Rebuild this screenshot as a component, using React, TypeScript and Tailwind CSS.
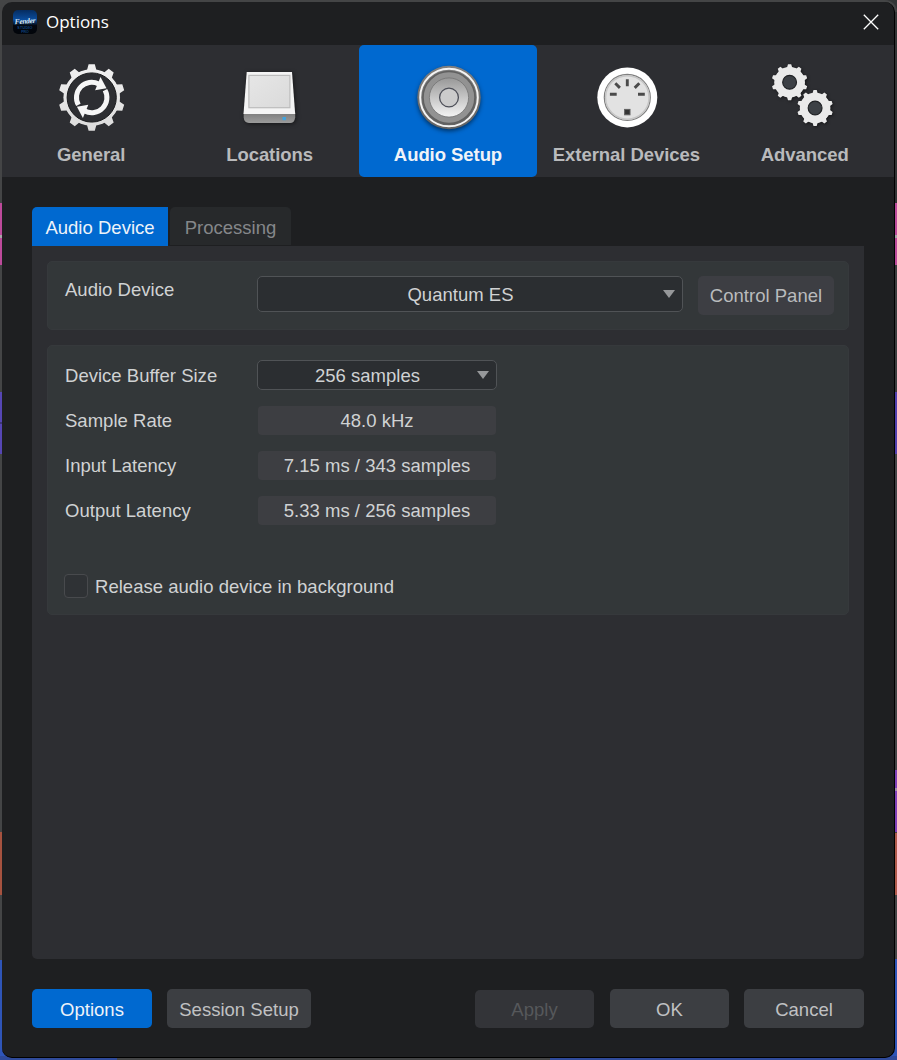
import { FC, ReactNode } from 'react';

interface TabProps {
  label: string;
  icon: ReactNode;
  active?: boolean;
}

interface RowProps {
  label: string;
  value: string;
}

const gearPath = (cx: number, cy: number, root: number, tip: number, base: number, top: number) => {
  const teeth = 10;
  const points: string[] = [];
  for (let i = 0; i < teeth; i++) {
    const mid = (i / teeth) * Math.PI * 2 - Math.PI / 2;
    [
      [root, -base],
      [tip, -top],
      [tip, top],
      [root, base],
    ].forEach(([r, half]) => {
      const a = mid + half / r;
      points.push(`${(cx + r * Math.cos(a)).toFixed(2)} ${(cy + r * Math.sin(a)).toFixed(2)}`);
    });
  }
  return `M${points.join('L')}Z`;
};

const iconClass = 'h-20 w-20 overflow-visible';

const GeneralIcon = () => (
  <svg viewBox="0 0 80 80" className={iconClass}>
    <defs>
      <linearGradient id="gearFill" x1="0" y1="0" x2="0" y2="1">
        <stop offset="0" stopColor="#f0f0f0" />
        <stop offset="1" stopColor="#dcdcdc" />
      </linearGradient>
    </defs>
    <path d={gearPath(40.7, 40.5, 28, 33.3, 4.7, 3.1)} fill="url(#gearFill)" />
    <circle cx="40.7" cy="40.5" r="28.3" fill="url(#gearFill)" />
    <circle cx="40.7" cy="40.5" r="24.6" fill="#2d2e32" stroke="#1b1c1e" strokeWidth="1" />
    <g transform="translate(40.7 40.5)" fill="#f6f6f6">
      <path d="M-13.3 7.4A15.2 15.2 0 0 1 7 -13.5" fill="none" stroke="#f6f6f6" strokeWidth="5" />
      <path d="M8.8 -20.5L14.8 -9.3L3.4 -7.3Z" />
      <g transform="rotate(180)">
        <path d="M-13.3 7.4A15.2 15.2 0 0 1 7 -13.5" fill="none" stroke="#f6f6f6" strokeWidth="5" />
        <path d="M8.8 -20.5L14.8 -9.3L3.4 -7.3Z" />
      </g>
    </g>
  </svg>
);

const LocationsIcon = () => (
  <svg viewBox="0 0 80 80" className={`${iconClass} drop-shadow-[1px_1px_2px_rgba(0,0,0,0.5)]`}>
    <defs>
      <linearGradient id="driveFront" x1="0" y1="0" x2="0" y2="1">
        <stop offset="0" stopColor="#7c7c7c" />
        <stop offset="1" stopColor="#9c9c9c" />
      </linearGradient>
      <linearGradient id="driveTop" x1="0" y1="0" x2="1" y2="1">
        <stop offset="0" stopColor="#e6e6e6" />
        <stop offset="1" stopColor="#dadada" />
      </linearGradient>
    </defs>
    <path d="M13.700 56H65.200V60.500Q64.500 66 60 66H19Q14 65.500 13.700 60.500Z" fill="url(#driveFront)" />
    <path d="M16.700 15H62L65.200 57H13.500Z" fill="#f4f4f4" />
    <rect x="18.900" y="18.400" width="41" height="32.300" fill="url(#driveTop)" stroke="#bcbcbc" strokeWidth="1.200" />
    <rect x="52.500" y="60" width="3.400" height="3.200" fill="#3fa4e0" />
  </svg>
);

const SpeakerIcon = () => (
  <svg viewBox="0 0 80 80" className={`${iconClass} drop-shadow-[0_2px_2px_rgba(0,0,0,0.5)]`}>
    <defs>
      <linearGradient id="cone" x1="0" y1="0" x2="0" y2="1">
        <stop offset="0" stopColor="#989898" />
        <stop offset="1" stopColor="#f4f4f4" />
      </linearGradient>
      <linearGradient id="rim" x1="0" y1="0" x2="0" y2="1">
        <stop offset="0" stopColor="#808080" />
        <stop offset="1" stopColor="#626262" />
      </linearGradient>
    </defs>
    <circle cx="41" cy="40.500" r="31.700" fill="url(#rim)" />
    <circle cx="41" cy="40.500" r="28.800" fill="none" stroke="#f4f4f4" strokeWidth="2" />
    <circle cx="41" cy="40.500" r="26" fill="#929292" stroke="#606060" strokeWidth="1.600" />
    <circle cx="41" cy="40.500" r="19.600" fill="url(#cone)" stroke="#747474" strokeWidth="0.800" />
    <circle cx="41" cy="40.500" r="9.400" fill="#cbcbcb" stroke="#4d4f58" strokeWidth="1.300" />
  </svg>
);

const MidiIcon = () => (
  <svg viewBox="0 0 80 80" className={`${iconClass} translate-x-px`}>
    <circle cx="40.300" cy="40.400" r="30" fill="#fff" />
    <circle cx="40.300" cy="40.400" r="23" fill="#e2e2e2" stroke="#808080" strokeWidth="1.200" />
    <circle cx="40.300" cy="40.400" r="21.700" fill="none" stroke="#c6c6c6" strokeWidth="1.400" />
    <g stroke="#4a4a4a" strokeWidth="2.900">
      <path d="M40.300 22.300V29.300M22.900 37.300H29.700M51 37.300H57.800M28.300 26.300L32.900 30.900M52.300 26.300L47.700 30.900" />
    </g>
    <rect x="37.600" y="52.400" width="5.400" height="5.400" fill="#333" stroke="#606060" strokeWidth="1" />
  </svg>
);

const AdvancedIcon = () => (
  <svg viewBox="0 0 80 80" className={`${iconClass} drop-shadow-[1px_1px_1.500px_rgba(0,0,0,0.5)]`}>
    {[
      [24.6, 25.3],
      [50.1, 51],
    ].map(([x, y]) => (
      <g key={x}>
        <path d={gearPath(x, y, 15, 18, 2.6, 1.6)} fill="#eaeaea" />
        <circle cx={x} cy={y} r="15.300" fill="#eaeaea" />
        <circle cx={x} cy={y} r="6.900" fill="#3c4045" stroke="#202225" strokeWidth="1.200" />
      </g>
    ))}
  </svg>
);

const AppIcon = () => (
  <svg viewBox="0 0 24 24" className="h-6 w-6">
    <defs>
      <linearGradient id="appGlow" x1="0" y1="0" x2="0" y2="1">
        <stop offset="0" stopColor="#052c60" />
        <stop offset="0.4" stopColor="#0a4c9c" />
        <stop offset="0.650" stopColor="#03070f" />
        <stop offset="1" stopColor="#02050a" />
      </linearGradient>
    </defs>
    <rect width="24" height="24" rx="5" fill="url(#appGlow)" />
    <text x="12" y="13.500" textAnchor="middle" fontSize="7.500" fontStyle="italic" fontWeight="700" fontFamily="Liberation Serif, serif" letterSpacing="-0.300" fill="#dbe7f5" transform="rotate(-4 12 12)">
      Fender
    </text>
    <text x="12" y="19" textAnchor="middle" fontSize="3.600" letterSpacing="0.300" fontFamily="Liberation Sans, sans-serif" fill="#1668bd">
      STUDIO
    </text>
    <text x="12" y="22.600" textAnchor="middle" fontSize="3.400" letterSpacing="0" fontFamily="Liberation Sans, sans-serif" fill="#1668bd">
      PRO
    </text>
  </svg>
);

const CategoryTab: FC<TabProps> = ({ label, icon, active }) => (
  <button
    className={`flex flex-col items-center pt-3 text-[18.5px] leading-6 font-bold tracking-[-0.06px] ${
      active ? 'rounded-[5px] bg-[#0069d0] text-[#f0f3f8]' : 'text-[#b9babc]'
    }`}
  >
    {icon}
    <span className="mt-1.5 whitespace-nowrap">{label}</span>
  </button>
);

const ValueRow: FC<RowProps> = ({ label, value }) => (
  <div className="flex h-[45px] items-start">
    <span className="w-[193px] leading-[32px]">{label}</span>
    <span className="mt-px h-[29px] w-[238px] rounded bg-[#3d3e42] text-center leading-[30px]">{value}</span>
  </div>
);

const Arrow = () => (
  <svg viewBox="0 0 12 8" className="h-2 w-3 shrink-0">
    <path d="M0 0H12L6 8Z" fill="#96989a" />
  </svg>
);

const left = [
  'h-[203px] bg-[#444546]',
  'h-[32px] bg-[#bd4a9b]',
  'h-[3px] bg-[#aaa5a9]',
  'h-[27px] bg-[#bd4a9b]',
  'h-[127px] bg-[#444546]',
  'h-[30px] bg-[#5646b4]',
  'h-[2px] bg-[#3c3577]',
  'h-[30px] bg-[#5646b4]',
  'h-[378px] bg-[#444546]',
  'h-[63px] bg-[#a6523f]',
  'h-[65px] bg-[#444546]',
  'h-[100px] bg-[#2f55b8]',
];

const right = [
  'h-[203px] bg-[#333536]',
  'h-[32px] bg-[#bd4a9b]',
  'h-[3px] bg-[#aaa5a9]',
  'h-[27px] bg-[#bd4a9b]',
  'h-[127px] bg-[#3c3e3f]',
  'h-[62px] bg-[#5140ae]',
  'h-[316px] bg-[#444546]',
  'h-[18px] bg-[#8040b8]',
  'h-[3px] bg-[#a08ab0]',
  'h-[41px] bg-[#8040b8]',
  'h-[1px] bg-[#444546]',
  'h-[62px] bg-[#b05a4c]',
  'h-[64px] bg-[#444546]',
  'h-[101px] bg-[#2f55b8]',
];

const App: FC = () => (
  <div className="relative h-[1060px] w-[897px] overflow-hidden bg-[#444546] font-['Liberation_Sans',Arial,sans-serif] text-[18.5px] tracking-[0.02px] text-[#d0d2d3]">
    {/* tracks of the project window showing around the dialog */}
    <div className="absolute inset-0 flex justify-between">
      <div className="w-3">
        {left.map((c, i) => (
          <div key={i} className={c} />
        ))}
      </div>
      <div className="w-3">
        {right.map((c, i) => (
          <div key={i} className={c} />
        ))}
      </div>
    </div>
    <div className="absolute inset-x-0 bottom-0 flex h-1 justify-between">
      <div className="w-[117px] bg-[#2f4a9a]" />
      <div className="w-[347px] bg-[#2f4a9a]" />
    </div>
    <div className="absolute inset-x-0 top-0 h-3 rounded-t-xl bg-[#444546]" />

    <div className="relative mt-0.5 ml-0.5 flex h-[1056px] w-[893px] flex-col overflow-hidden rounded-[10px] border-r border-b border-black bg-[#1e1f21]">
      <header className="flex h-[43px] shrink-0 items-center pr-[15px] pb-[3px] pl-[11px]">
        <AppIcon />
        <span className="ml-[9px] font-['Open_Sans',sans-serif] text-[17px] tracking-normal text-white">Options</span>
        <svg viewBox="0 0 16 16" className="ml-auto h-4 w-4">
          <path d="M0.800 0.800L15.200 15.200M15.200 0.800L0.800 15.200" stroke="#fff" strokeWidth="1.300" />
        </svg>
      </header>

      <nav className="grid h-[132px] shrink-0 grid-cols-5 bg-[#2d2e32]">
        <CategoryTab label="General" icon={<GeneralIcon />} />
        <CategoryTab label="Locations" icon={<LocationsIcon />} />
        <CategoryTab label="Audio Setup" icon={<SpeakerIcon />} active />
        <CategoryTab label="External Devices" icon={<MidiIcon />} />
        <CategoryTab label="Advanced" icon={<AdvancedIcon />} />
      </nav>

      <main className="px-[30px] pt-[30px]">
        <div className="flex h-[39px] gap-0.5">
          <button className="h-[39px] w-[136px] rounded-tl-[5px] bg-[#0069d0] pt-0.5 text-[#eef3f9]">Audio Device</button>
          <button className="h-[38px] w-[121px] rounded-t-[5px] bg-[#27292b] pt-[3px] text-[#85878a]">Processing</button>
        </div>

        <section className="flex h-[713px] w-[832px] flex-col gap-[15px] rounded-b-[5px] bg-[#2d2e32] px-[15px] pt-[15px]">
          <div className="flex h-[69px] items-start rounded-[5px] border border-[#36393c] bg-[#333739] pt-3.5 pl-[17px]">
            <span className="w-[192px] leading-[28px]">Audio Device</span>
            <button className="flex h-9 w-[426px] items-center rounded-[5px] border-[1.5px] border-[#505356] bg-[#2b2e31] pr-[7px]">
              <span className="flex-1 pt-0.5 text-center">Quantum ES</span>
              <Arrow />
            </button>
            <button className="ml-[15px] h-[39px] w-[136px] rounded-[5px] bg-[#3d3e43] pt-px text-[#b9bbbd]">Control Panel</button>
          </div>

          <div className="h-[270px] rounded-[5px] border border-[#36393c] bg-[#333739] pt-3.5 pl-[17px]">
            <div className="flex h-[45px] items-start">
              <span className="w-[192px] leading-[32px]">Device Buffer Size</span>
              <button className="flex h-[30px] w-[240px] items-center rounded-[5px] border-[1.5px] border-[#505356] bg-[#2b2e31] pr-[7px]">
                <span className="flex-1 pt-0.5 text-center">256 samples</span>
                <Arrow />
              </button>
            </div>
            <ValueRow label="Sample Rate" value="48.0 kHz" />
            <ValueRow label="Input Latency" value="7.15 ms / 343 samples" />
            <ValueRow label="Output Latency" value="5.33 ms / 256 samples" />
            <label className="mt-[32px] -ml-px flex items-center gap-[7px]">
              <span className="h-6 w-6 rounded border-[1.5px] border-[#484a4d] bg-[#2f3235]" />
              <span className="pt-px">Release audio device in background</span>
            </label>
          </div>
        </section>

        <footer className="mt-[30px] flex w-[832px] gap-[15px] text-[#c0c1c3]">
          <button className="h-[39px] w-[120px] rounded-[5px] bg-[#0069d0] pt-[3px] text-[#eef3f9]">Options</button>
          <button className="h-[39px] w-[144px] rounded-[5px] bg-[#3c3e42] pt-[3px]">Session Setup</button>
          <button className="mt-px mr-px ml-auto h-[38px] w-[119px] rounded-[5px] bg-[#333438] pt-0.5 text-[#56585b]">Apply</button>
          <button className="h-[39px] w-[119px] rounded-[5px] bg-[#3c3e42] pt-[3px]">OK</button>
          <button className="h-[39px] w-[120px] rounded-[5px] bg-[#3c3e42] pt-[3px]">Cancel</button>
        </footer>
      </main>
    </div>
  </div>
);

export default App;
